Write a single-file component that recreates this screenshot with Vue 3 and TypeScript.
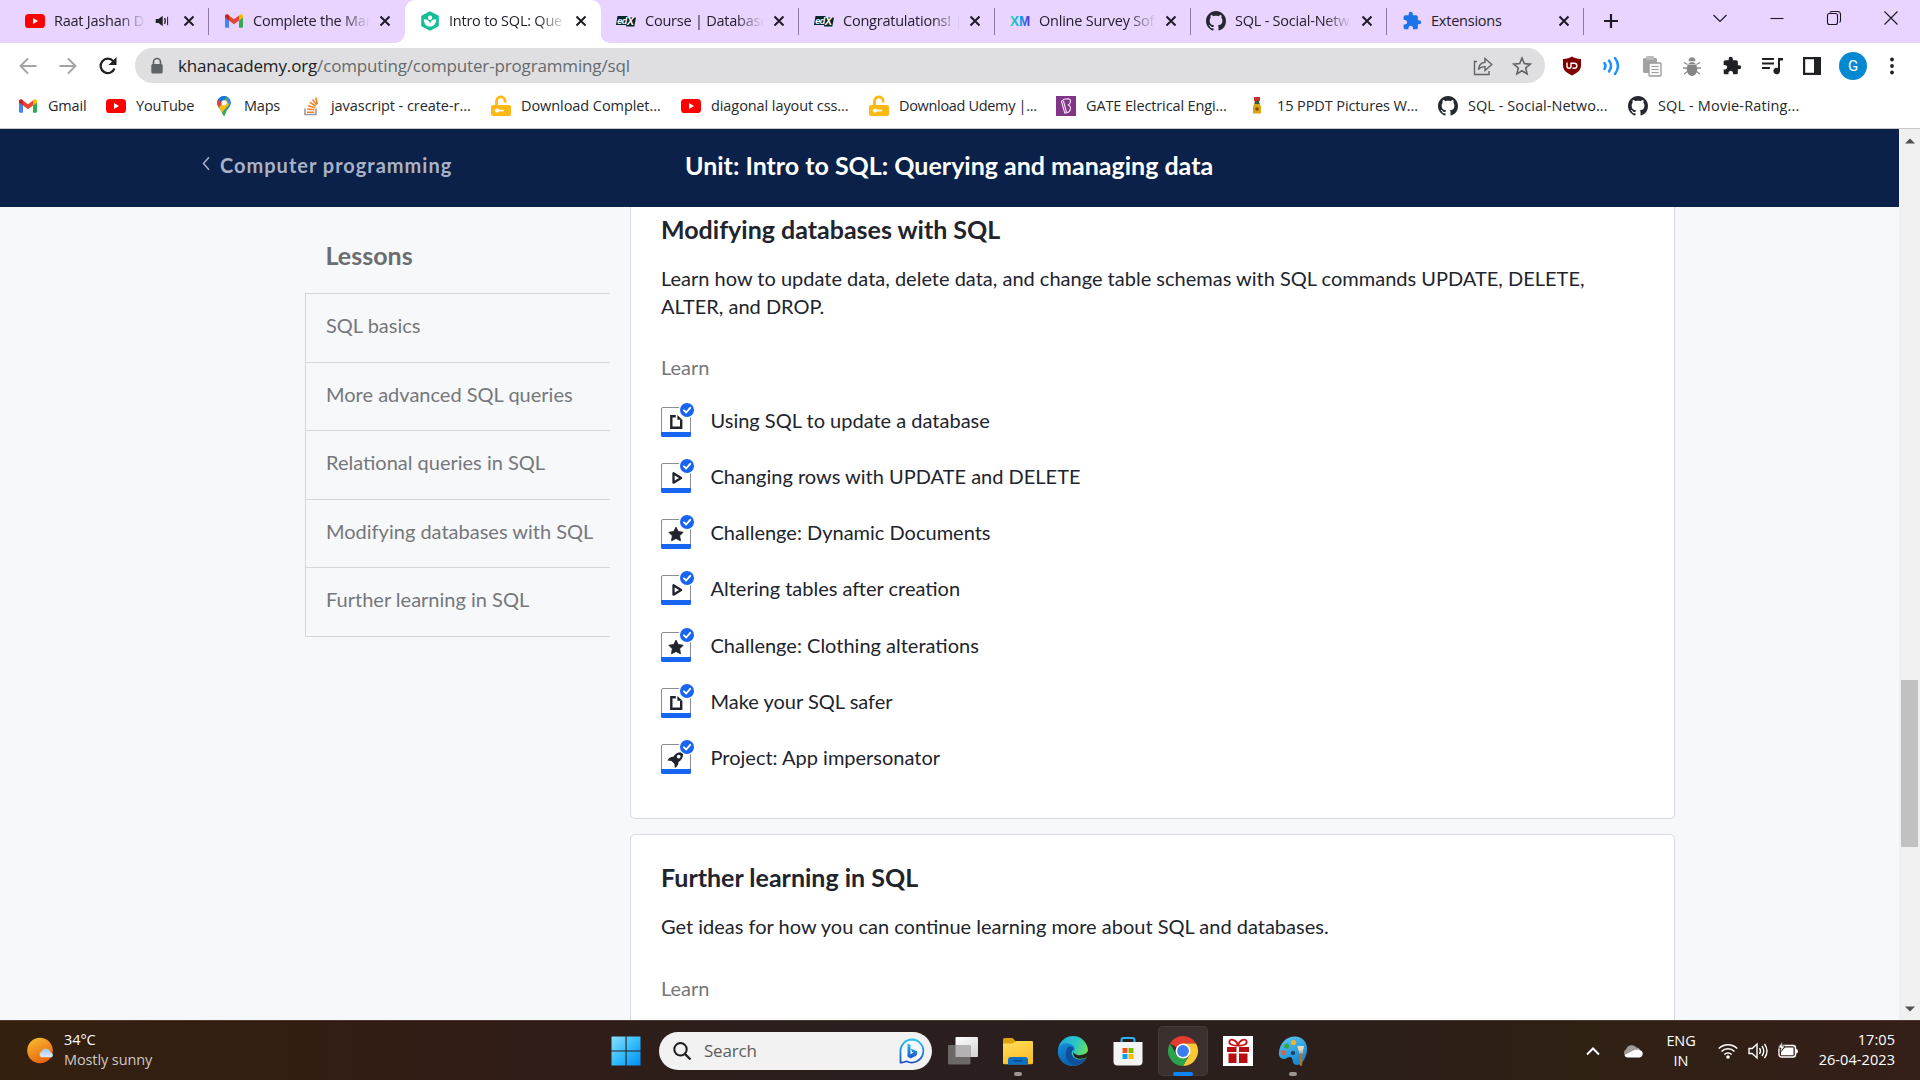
<script setup lang="ts">
interface Icon { box: string; body: string }
interface Tab { icon: string; title: string; width: number; active?: boolean; audio?: boolean; line?: boolean }
interface Bookmark { icon: string; label: string; width: number; spacing: number }

const octocatPath = 'M8 0C3.58 0 0 3.58 0 8c0 3.54 2.29 6.53 5.47 7.59.4.07.55-.17.55-.38 0-.19-.01-.82-.01-1.49-2.01.37-2.53-.49-2.69-.94-.09-.23-.48-.94-.82-1.13-.28-.15-.68-.52-.01-.53.63-.01 1.08.58 1.23.82.72 1.21 1.87.87 2.33.66.07-.52.28-.87.51-1.07-1.78-.2-3.64-.89-3.64-3.95 0-.87.31-1.59.82-2.15-.08-.2-.36-1.02.08-2.12 0 0 .67-.21 2.2.82.64-.18 1.32-.27 2-.27s1.36.09 2 .27c1.53-1.04 2.2-.82 2.2-.82.44 1.1.16 1.92.08 2.12.51.56.82 1.27.82 2.15 0 3.07-1.87 3.75-3.65 3.95.29.25.54.73.54 1.48 0 1.07-.01 1.93-.01 2.2 0 .21.15.46.55.38A8.01 8.01 0 0 0 16 8c0-4.42-3.58-8-8-8z'
const puzzlePath = 'M20.5 11H19V7c0-1.1-.9-2-2-2h-4V3.5a2.5 2.5 0 0 0-5 0V5H4c-1.1 0-2 .9-2 2v3.8h1.5c1.5 0 2.7 1.2 2.7 2.7S5 16.2 3.5 16.2H2V20c0 1.1.9 2 2 2h3.8v-1.5c0-1.5 1.2-2.7 2.7-2.7s2.7 1.2 2.7 2.7V22H17c1.1 0 2-.9 2-2v-4h1.5a2.5 2.5 0 0 0 0-5z'

const icons: Record<string, Icon> = {
  youtube: { box: '0 0 20 20', body: '<rect y="3" width="20" height="14" rx="3.6" fill="#f00"/><path d="M8 7l5 3-5 3z" fill="#fff"/>' },
  gmail: { box: '0 0 20 20', body: '<path d="M1 6v9.4c0 .8.6 1.3 1.3 1.3H5V9z" fill="#4285f4"/><path d="M15 9v7.7h2.7c.7 0 1.3-.5 1.3-1.3V6z" fill="#34a853"/><path d="M15 4.600V9.500l4-3V5c0-1.700-1.900-2.400-3.200-1.400z" fill="#fbbc04"/><path d="M5 9.500V4.500l5 3.800 5-3.800v5l-5 3.800z" fill="#ea4335"/><path d="M1 5v1.500l4 3v-5l-.8-.9C2.900 2.600 1 3.300 1 5z" fill="#c5221f"/>' },
  khan: { box: '0 0 20 20', body: '<path d="M10 .3l8.200 4.300q.6.400.600 1v8.800q0 .6-.6 1L10 19.700 1.800 15.400q-.6-.400-.6-1V5.600q0-.6.600-1z" fill="#14bf96"/><circle cx="10" cy="6.800" r="2.200" fill="#fff"/><path d="M3.800 8.200c3.600 0 5.400 1.600 6.200 4 .8-2.400 2.600-4 6.200-4 0 4.600-2.700 7.400-6.200 7.400s-6.200-2.800-6.200-7.400z" fill="#fff"/>' },
  edx: { box: '0 0 20 20', body: '<path d="M1.500 5h10l-.300 1.500H20L18.300 15.500H10l.2-1.500H0z" fill="#02262b"/><text x="1.300" y="12.500" font-size="9" font-weight="700" font-style="italic" font-family="Liberation Sans" fill="#fff" textLength="10">ed</text><text x="11" y="14.300" font-size="10.500" font-weight="700" font-style="italic" font-family="Liberation Sans" fill="#fff">X</text>' },
  xm: { box: '0 0 20 20', body: '<defs><linearGradient id="xmg" x2="1"><stop stop-color="#21dbaa"/><stop offset=".5" stop-color="#00a8f5"/><stop offset="1" stop-color="#5a28d8"/></linearGradient></defs><text x="0" y="15.300" font-size="15" font-weight="700" font-family="Liberation Sans" fill="url(#xmg)" textLength="20" lengthAdjust="spacingAndGlyphs">XM</text>' },
  github: { box: '0 0 16 16', body: `<path d="${octocatPath}" fill="#24292f"/>` },
  puzzleBlue: { box: '0 0 24 24', body: `<path d="${puzzlePath}" fill="#1a73e8"/>` },
  puzzle: { box: '0 0 24 24', body: `<path d="${puzzlePath}" fill="#202124"/>` },
  maps: { box: '0 0 20 20', body: '<clipPath id="pin"><path d="M10 0a6.800 6.800 0 0 1 6.800 6.800c0 4.600-4 6-5.500 11.600-.4 1.700-2.200 1.700-2.600 0C7.200 12.800 3.200 11.400 3.200 6.800A6.800 6.800 0 0 1 10 0z"/></clipPath><g clip-path="url(#pin)"><path d="M0 0h20v20H0z" fill="#34a853"/><path d="M0 12L16 -2H0z" fill="#1a73e8"/><path d="M2 3l8 4-7 7z" fill="#ea4335"/><path d="M3 13L18 -3l2 8-11 11z" fill="#4285f4"/><path d="M4 12.500l8-9 3 5-8 9z" fill="#fbbc04"/></g><circle cx="10" cy="6.800" r="2.600" fill="#fff"/>' },
  stack: { box: '0 0 20 20', body: '<path d="M4 12.500v6h11v-6" fill="none" stroke="#9a9c9f" stroke-width="1.600"/><path d="M6 16.200h7.200M6.200 13.100l7.200.7M7 9.800l6.900 1.900M8.700 6.300l6 3.700M11.500 3.300l4.200 5.600M14.800 1.500l1.500 6.500" stroke="#f48024" stroke-width="1.500" fill="none"/>' },
  unlock: { box: '0 0 20 20', body: '<path d="M5.500 10V5.500a4.300 4.300 0 0 1 8.600-.500v1.500" fill="none" stroke="#fdb813" stroke-width="2.800"/><rect y="9" width="20" height="11" rx="2" fill="#fdb813"/><circle cx="6" cy="14.500" r="2.100" fill="#fff"/><path d="M6 13.700h7v1.700H6z" fill="#fff"/>' },
  byju: { box: '0 0 20 20', body: '<path d="M0 0h20v20H0z" fill="#813588"/><path d="M5.500 5.500L8 3.200l4-.5c3.500.2 3.200 5-.2 6.300 4 .5 3.200 7-1 7.800l-2 .4zM7.500 5l3 11.500" fill="none" stroke="#f6e5f7" stroke-width="1.100"/>' },
  medal: { box: '0 0 20 20', body: '<path d="M7 1h6v4H7z" fill="#c4302b"/><path d="M8 5h4l1 4H7z" fill="#3b5b2b"/><path d="M7 8h6l1 3v6.500H6V11z" fill="#d9a514"/><circle cx="10" cy="13" r="1.800" fill="#8a4a10"/>' },
  share: { box: '0 0 20 20', body: '<path d="M4 5.500H1.500v13h14.500V15M5.500 13.500c.5-5 3.300-7 6.500-7.200V2.500l6.800 6-6.800 6v-3.900c-3 0-5 .7-6.500 2.900z" fill="none" stroke="#5f6368" stroke-width="1.400"/>' },
  star: { box: '0 0 20 20', body: '<path d="M10 2l2.300 5.600 6 .5-4.600 3.900 1.400 5.900-5.100-3.200-5.100 3.200 1.400-5.900-4.600-3.900 6-.5z" fill="none" stroke="#5f6368" stroke-width="1.600"/>' },
  ublock: { box: '0 0 20 20', body: '<path d="M10 .5c2.500 1.600 5 2.300 9 2.400v6.600c0 5-4 7.500-9 10-5-2.500-9-5-9-10V2.900C5 2.800 7.500 2.100 10 .5z" fill="#800000"/><path d="M5 6.500v3.700a2 2 0 0 0 4 0V6.500M9 7.200h3.300a2.500 2.500 0 0 1 0 5.100H10.500" fill="none" stroke="#fff" stroke-width="1.400"/>' },
  waves: { box: '0 0 20 20', body: '<path d="M2.500 7q2 3 0 6M7 4.500q4 5.500 0 11M13 2q6 8 0 16" fill="none" stroke="#1e90ff" stroke-width="2.500" stroke-linecap="round"/>' },
  copy: { box: '0 0 20 20', body: '<rect x="1" y="2" width="14" height="15" rx="1.500" fill="#a3a3a3"/><rect x="4" y="0" width="8" height="4" rx="1" fill="#bababa"/><rect x="7" y="7" width="12" height="13" rx="1" fill="#f7f7f7" stroke="#9b9b9b" stroke-width="1.300"/><path d="M9.500 10.500h7M9.500 13.500h7M9.500 16.500h7" stroke="#9b9b9b" stroke-width="1.200"/>' },
  bug: { box: '0 0 20 20', body: '<path d="M5.500 8.500L2 6.500M14.500 8.500L18 6.500M5 12H1M15 12h4M5.500 15.500L2 18M14.500 15.500l3.500 2.500" stroke="#8b8b8b" stroke-width="1.300"/><path d="M6.500 5.200a3.500 3.900 0 0 1 7 0z" fill="#8b8b8b"/><ellipse cx="10" cy="13" rx="5.300" ry="7" fill="#858585"/><path d="M5.500 8.500h9" stroke="#c4c4c4"/>' },
  queue: { box: '0 0 20 20', body: '<path d="M0 3h12M0 7.500h12M0 12h8" stroke="#202124" stroke-width="2"/><path d="M21 2h-5v10a3.300 3.300 0 1 0 2 3V4.500h3z" fill="#202124"/>' },
  panel: { box: '0 0 20 20', body: '<path d="M1 1h18v18H1zM3.200 3.200v13.600h8.800V3.200z" fill="#202124" fill-rule="evenodd"/>' },
  dots: { box: '0 0 20 20', body: '<g fill="#202124"><circle cx="10" cy="3.500" r="1.900"/><circle cx="10" cy="10" r="1.900"/><circle cx="10" cy="16.500" r="1.900"/></g>' },
  back: { box: '0 0 20 20', body: '<path d="M18.500 10H3M10 2.500L2.500 10l7.500 7.500" fill="none" stroke="#a2a4a7" stroke-width="2"/>' },
  forward: { box: '0 0 20 20', body: '<path d="M1.500 10H17M10 2.500l7.500 7.500-7.500 7.500" fill="none" stroke="#a2a4a7" stroke-width="2"/>' },
  reload: { box: '0 0 20 20', body: '<path d="M16.500 12.500A7.200 7.200 0 1 1 15.300 5.200" fill="none" stroke="#202124" stroke-width="2.200"/><path d="M18.500 1v8h-8z" fill="#202124"/>' },
  lock: { box: '0 0 20 20', body: '<path d="M6.500 9V6a3.500 3.500 0 0 1 7 0v3" fill="none" stroke="#5f6368" stroke-width="1.700"/><rect x="4.300" y="8" width="11.400" height="9.500" rx="1.500" fill="#5f6368"/>' },
  audio: { box: '0 0 20 20', body: '<path d="M1 7h4l6-4.500v15L5 13H1z" fill="#202124"/><path d="M13.500 6q2.500 4 0 8" fill="none" stroke="#202124" stroke-width="1.800"/><path d="M18 4v12" stroke="#202124" stroke-width="1.400"/>' },
  sun: { box: '0 0 28 28', body: '<defs><linearGradient id="sg" x2=".5" y2="1"><stop stop-color="#f7c034"/><stop offset="1" stop-color="#e8670c"/></linearGradient><linearGradient id="cg" y2="1" x2="0"><stop stop-color="#a9c8f2"/><stop offset="1" stop-color="#dce9fb"/></linearGradient></defs><circle cx="13" cy="13.500" r="12.800" fill="url(#sg)"/><path d="M14 20.300a3.600 3.600 0 0 1 .6-6.100 4.800 4.800 0 0 1 8.900 1 3 3 0 0 1 1.500 5.100z" fill="url(#cg)"/>' },
  windows: { box: '0 0 30 30', body: '<defs><linearGradient id="wg" x2="1" y2="1"><stop stop-color="#8be0ff"/><stop offset=".5" stop-color="#35bdfd"/><stop offset="1" stop-color="#008df5"/></linearGradient></defs><path d="M1 .5h13.500v14H.5V1zM15.600.5H29.500v14H15.600zM.5 15.600h14v14H.5zM15.600 15.600h13.900v14H15.600z" fill="url(#wg)"/>' },
  search: { box: '0 0 20 20', body: '<circle cx="8.500" cy="8.300" r="6.200" fill="none" stroke="#1d1d1d" stroke-width="2"/><path d="M13 13l5.500 5.500" stroke="#1d1d1d" stroke-width="2.300"/>' },
  bing: { box: '0 0 26 26', body: '<defs><linearGradient id="bg1" x2="0" y2="1"><stop stop-color="#27c0f1"/><stop offset="1" stop-color="#1e4fc9"/></linearGradient></defs><path d="M13 1.500a11.500 11.500 0 1 1-5.500 21.700q-3 1.500-6 1.300V13A11.500 11.500 0 0 1 13 1.500z" fill="#f7fbff" stroke="url(#bg1)" stroke-width="1.800"/><path d="M8.500 5.500l3 1.200v9.500l3-1.600-1.500-.8-1.200-3.200 5.700 2.300c1.500 1 1 4-.7 5l-5.300 2.700-3-2z" fill="url(#bg1)"/>' },
  taskview: { box: '0 0 30 30', body: '<defs><linearGradient id="tv" y2="1" x2=".6"><stop stop-color="#fff"/><stop offset="1" stop-color="#d8d8d8"/></linearGradient></defs><rect x="7.500" y="1" width="22.500" height="20" rx="1" fill="url(#tv)"/><rect y="9" width="22.500" height="19.500" rx="1" fill="#6c6868"/><path d="M7.500 9h15v12h-15z" fill="#b4b2b2"/>' },
  explorer: { box: '0 0 30 30', body: '<defs><linearGradient id="eg" y2="1" x2=".4"><stop stop-color="#ffde5c"/><stop offset="1" stop-color="#fdbe2a"/></linearGradient></defs><path d="M0 3.500q0-1.500 1.500-1.500h8L12.500 5v8H0z" fill="#e0a111"/><path d="M0 7.500h9.500l3.500-2.500h15.700q1.300 0 1.300 1.300V27q0 1.300-1.300 1.300H1.300Q0 28.300 0 27z" fill="url(#eg)"/><path d="M5 28.700V24q0-3 3-3h14q3 0 3 3v4.700z" fill="#0c6fc0"/><path d="M10.500 24.700h9" stroke="#064c8c" stroke-width="1.500"/>' },
  edge: { box: '0 0 30 30', body: '<defs><linearGradient id="ed1" x2="1" y2=".4"><stop stop-color="#1ba4e4"/><stop offset=".6" stop-color="#2cc7c5"/><stop offset="1" stop-color="#6bdf55"/></linearGradient><linearGradient id="ed2" x2=".6" y2="1"><stop stop-color="#1490dc"/><stop offset="1" stop-color="#0a59a5"/></linearGradient></defs><circle cx="15" cy="15" r="15" fill="url(#ed1)"/><path d="M0 14C1 8 7 6 12 8c4 1.500 5 4 4.500 5.500-5 1-5 9 3 10 4 .5 6-1 8.500-1.500C24 28 19 30 14.500 30 6 30-.5 23 0 14z" fill="url(#ed2)"/><path d="M10 11c-5 7-1 17 8 18.500 4-.5 8-3 10.500-7.500-4 2.500-9 2.500-12.500-.5-3-2.500-3-6-.5-8.500-.5-2-3.500-3-5.500-2z" fill="#0f4f9b"/><path d="M17 13c-2.500 2.500-1.500 5 2.500 6 4.500 1 10.500-1.500 10.500-5l.3 4.500c-1 3-3.300 4.500-5.300 4-6 1.500-11-2-9.500-6.500z" fill="#2b1f1d"/>' },
  store: { box: '0 0 30 30', body: '<path d="M8.500 8V4q0-2 2-2h9q2 0 2 2v4" fill="none" stroke="#2ab4f2" stroke-width="2"/><path d="M.5 6h29v19.500q0 4-4 4H4.500q-4 0-4-4z" fill="#f3f3f3"/><path d="M9.500 12h5v5h-5z" fill="#f25022"/><path d="M15.500 12h5v5h-5z" fill="#7fba00"/><path d="M9.500 18h5v5h-5z" fill="#00a4ef"/><path d="M15.500 18h5v5h-5z" fill="#ffb900"/>' },
  chrome: { box: '0 0 30 30', body: '<path d="M15 15L2 7.500A15 15 0 0 1 28 7.500H15z" fill="#e33b2e"/><path d="M15 7.500h13A15 15 0 0 1 15 30l6.500-11.200z" fill="#fcc934"/><path d="M2 7.500A15 15 0 0 0 15 30l6.500-11.200L15 15 8.500 18.800z" fill="#2ba24c"/><circle cx="15" cy="15" r="7.500" fill="#fff"/><circle cx="15" cy="15" r="5.900" fill="#3a7df0"/>' },
  gift: { box: '0 0 30 30', body: '<path d="M0 0h30v30H0z" fill="#fff"/><path d="M4 11h9.500v5H4zM16 11h10v5H16zM5.500 17.500h8V27h-8zM16 17.500h8.500V27H16z" fill="#b60f12"/><path d="M15 9.500C9 10 5.500 8 6.500 5c1.200-3 7.500-1 8.500 4.500C16 4 22.300 2 23.500 5c1 3-2.500 5-8.500 4.500z" fill="none" stroke="#c81216" stroke-width="1.800"/>' },
  paint: { box: '0 0 30 30', body: '<defs><linearGradient id="pg" x2=".5" y2="1"><stop stop-color="#5fc9f5"/><stop offset="1" stop-color="#1788d1"/></linearGradient></defs><path d="M17 .5c7 0 12 5 12 12 0 9-5 16.500-10 16.500-4 0-4-3-4.500-5.500S12 20 9 22 0 23 1 16C2 7 8 .5 17 .5z" fill="url(#pg)"/><circle cx="8.500" cy="10" r="2.600" fill="#35a646"/><circle cx="15.500" cy="6.500" r="2.600" fill="#f0b429"/><circle cx="5.500" cy="16.500" r="2.500" fill="#e2603a"/><circle cx="15" cy="17" r="2.100" fill="#173b63"/><path d="M20.500 15l-1-5h6.500l-1 5z" fill="#e8d9bd"/><path d="M21 14.500h4v3h-4z" fill="#b9bcc0"/><path d="M21.300 17.500h3.200l-.3 11.500q-1.300 2-2.500 0z" fill="#b96f24"/>' },
  up: { box: '0 0 20 20', body: '<path d="M4 13.500L10 7.500l6 6" fill="none" stroke="#fff" stroke-width="2"/>' },
  cloud: { box: '0 0 20 20', body: '<path d="M3.500 15A3.500 3.500 0 0 1 3 8.500a6 6 0 0 1 10.500-2A5 5 0 0 1 17 8.500L9 15z" fill="#a09b98"/><path d="M5 16.500q-3 0-3.500-2.500L9 10.200c3-1.700 5-1.500 7.500-1.200a3.800 3.800 0 0 1 0 7.500z" fill="#fff"/>' },
  wifi: { box: '0 0 20 20', body: '<path d="M.8 7.500a13 13 0 0 1 18.400 0M3.500 10.500a9.200 9.200 0 0 1 13 0M6.300 13.500a5.200 5.200 0 0 1 7.400 0" fill="none" stroke="#fff" stroke-width="1.500"/><circle cx="10" cy="16" r="1.800" fill="#fff"/>' },
  volume: { box: '0 0 20 20', body: '<path d="M1 7.500h3.200L9 3v14l-4.800-4.500H1z" fill="none" stroke="#fff" stroke-width="1.400"/><path d="M11.500 7.200q2 2.800 0 5.600M14 5q3.500 5 0 10M16.500 2.800q5 7.200 0 14.400" fill="none" stroke="#fff" stroke-width="1.400"/>' },
  battery: { box: '0 0 20 20', body: '<rect x="1" y="4.500" width="16.500" height="11.500" rx="2.500" fill="none" stroke="#fff" stroke-width="1.400"/><path d="M3 14.200V11L7 6.500h8.500v7.700z" fill="#fff"/><path d="M18 8q2 0 2 2.300t-2 2.300z" fill="#fff"/><path d="M4.500 0L0 7h3l-1 5 5-7H4z" fill="#fff" stroke="#2e1f14" stroke-width=".7"/>' },
  article: { box: '0 0 34 34', body: '<path d="M14.800 13.200h-4.500v11.600h9.900V16.800" fill="none" stroke="#21242c" stroke-width="2.400"/><path d="M16.400 11.900l5 4.900h-5z" fill="#21242c"/>' },
  video: { box: '0 0 34 34', body: '<path d="M12.500 14.300v9.400l7.600-4.700z" fill="none" stroke="#21242c" stroke-width="2.300" stroke-linejoin="round"/>' },
  challenge: { box: '0 0 34 34', body: '<path d="M15 12.200l2.200 4.400 4.900.7-3.500 3.500.8 4.900-4.400-2.300-4.400 2.300.8-4.900-3.500-3.500 4.900-.7z" fill="#21242c" stroke="#21242c" stroke-linejoin="round"/>' },
  project: { box: '0 0 34 34', body: '<path fill-rule="evenodd" d="M22 12.500c-4-.6-7.600.8-9.600 4.300-2.600 0-5 1.500-6 3.800l4.100.3 3 3 .3 4.100c2.300-1 3.700-3.400 3.700-6 3.500-2 5-5.400 4.500-9.500zm-4.300 6a1.900 1.900 0 1 1 0-3.800 1.900 1.900 0 0 1 0 3.800z" fill="#21242c"/>' },
}

const tabs: Tab[] = [
  { icon: 'youtube', title: 'Raat Jashan D', width: 199, audio: true, line: true },
  { icon: 'gmail', title: 'Complete the Mar', width: 196 },
  { icon: 'khan', title: 'Intro to SQL: Que', width: 196, active: true },
  { icon: 'edx', title: 'Course | Database', width: 198, line: true },
  { icon: 'edx', title: 'Congratulations! |', width: 196, line: true },
  { icon: 'xm', title: 'Online Survey Sof', width: 196, line: true },
  { icon: 'github', title: 'SQL - Social-Netw', width: 196, line: true },
  { icon: 'puzzleBlue', title: 'Extensions', width: 197, line: true },
]

const bookmarks: Bookmark[] = [
  { icon: 'gmail', label: 'Gmail', width: 88, spacing: -0.2 },
  { icon: 'youtube', label: 'YouTube', width: 108, spacing: -0.2 },
  { icon: 'maps', label: 'Maps', width: 87, spacing: -0.2 },
  { icon: 'stack', label: 'javascript - create-r...', width: 190, spacing: -0.06 },
  { icon: 'unlock', label: 'Download Complet...', width: 190, spacing: -0.07 },
  { icon: 'youtube', label: 'diagonal layout css...', width: 188, spacing: -0.08 },
  { icon: 'unlock', label: 'Download Udemy |...', width: 187, spacing: -0.33 },
  { icon: 'byju', label: 'GATE Electrical Engi...', width: 191, spacing: -0.12 },
  { icon: 'medal', label: '15 PPDT Pictures W...', width: 191, spacing: -0.1 },
  { icon: 'github', label: 'SQL - Social-Netwo...', width: 190, spacing: 0.06 },
  { icon: 'github', label: 'SQL - Movie-Rating...', width: 190, spacing: 0.14 },
]

const extensions = ['ublock', 'waves', 'copy', 'bug', 'puzzle', 'queue', 'panel']

const lessons = ['SQL basics', 'More advanced SQL queries', 'Relational queries in SQL', 'Modifying databases with SQL', 'Further learning in SQL']

const items = [
  { kind: 'article', title: 'Using SQL to update a database' },
  { kind: 'video', title: 'Changing rows with UPDATE and DELETE' },
  { kind: 'challenge', title: 'Challenge: Dynamic Documents' },
  { kind: 'video', title: 'Altering tables after creation' },
  { kind: 'challenge', title: 'Challenge: Clothing alterations' },
  { kind: 'article', title: 'Make your SQL safer' },
  { kind: 'project', title: 'Project: App impersonator' },
]

const apps = [
  { icon: 'taskview', state: '' },
  { icon: 'explorer', state: 'open' },
  { icon: 'edge', state: '' },
  { icon: 'store', state: '' },
  { icon: 'chrome', state: 'focused' },
  { icon: 'gift', state: '' },
  { icon: 'paint', state: 'open' },
]
</script>

<template>
  <div class="screen">
    <div class="tabstrip">
      <div v-for="(t, i) in tabs" :key="i" class="tab" :class="{ active: t.active, line: t.line }" :style="{ width: t.width + 'px' }">
        <svg class="i20" :viewBox="icons[t.icon].box" v-html="icons[t.icon].body" />
        <span class="tab-title" :class="{ fade: t.title !== 'Extensions' }">{{ t.title }}</span>
        <svg v-if="t.audio" class="audio" :viewBox="icons.audio.box" v-html="icons.audio.body" />
        <svg class="close" viewBox="0 0 12 12"><path d="M1.500 1.500l9 9M10.500 1.500l-9 9" stroke="#1f1b24" stroke-width="2" /></svg>
      </div>
      <svg class="plus" viewBox="0 0 16 16"><path d="M8 1v14M1 8h14" stroke="#1f1b24" stroke-width="2.200" /></svg>
      <div class="window-controls">
        <svg viewBox="0 0 14 14"><path d="M.5 4L7 10.500 13.500 4" /></svg>
        <svg viewBox="0 0 14 14"><path d="M.5 7.500h13" /></svg>
        <svg viewBox="0 0 14 14"><rect x=".5" y="2.500" width="10" height="11" rx="2" /><path d="M3 1.500Q3.500.5 5 .5h5.500q3 0 3 3v6q0 1.500-1 2" /></svg>
        <svg viewBox="0 0 14 14"><path d="M.5.5l13 13M13.500.5l-13 13" /></svg>
      </div>
    </div>

    <div class="toolbar">
      <div class="nav">
        <svg v-for="n in ['back', 'forward', 'reload']" :key="n" class="i20" :viewBox="icons[n].box" v-html="icons[n].body" />
      </div>
      <div class="omnibox">
        <svg class="i20" :viewBox="icons.lock.box" v-html="icons.lock.body" />
        <div class="url">khanacademy.org<span>/computing/computer-programming/sql</span></div>
        <svg class="i20" :viewBox="icons.share.box" v-html="icons.share.body" />
        <svg class="i20" :viewBox="icons.star.box" v-html="icons.star.body" />
      </div>
      <div class="extensions">
        <svg v-for="e in extensions" :key="e" class="i20" :viewBox="icons[e].box" v-html="icons[e].body" />
      </div>
      <div class="avatar">G</div>
      <svg class="i20" :viewBox="icons.dots.box" v-html="icons.dots.body" />
    </div>

    <div class="bookmarks">
      <div v-for="(b, i) in bookmarks" :key="i" class="bookmark" :style="{ width: b.width + 'px', letterSpacing: b.spacing + 'px' }">
        <svg class="i20" :viewBox="icons[b.icon].box" v-html="icons[b.icon].body" />
        <span>{{ b.label }}</span>
      </div>
    </div>

    <div class="viewport">
      <div class="page">
        <header class="unit-bar">
          <a class="back-link">
            <svg viewBox="0 0 8 14"><path d="M7 .8L1.500 7 7 13.200" fill="none" stroke="#a9b2c6" stroke-width="1.500" /></svg>
            Computer programming
          </a>
          <h1>Unit: Intro to SQL: Querying and managing data</h1>
        </header>
        <div class="columns">
          <aside>
            <h2>Lessons</h2>
            <nav class="lessons">
              <a v-for="l in lessons" :key="l">{{ l }}</a>
            </nav>
          </aside>
          <main>
            <section class="card first">
              <h3>Modifying databases with SQL</h3>
              <p>Learn how to update data, delete data, and change table schemas with SQL commands UPDATE, DELETE,<br>ALTER, and DROP.</p>
              <h4>Learn</h4>
              <ul>
                <li v-for="it in items" :key="it.title">
                  <svg class="kind" viewBox="0 0 34 34">
                    <path d="M.5 31V6q0-1.500 1.500-1.500h26q1.500 0 1.500 1.500v25" fill="#fff" stroke="#8a8d92" />
                    <path d="M0 29h30v3.500q0 1.500-1.500 1.500h-27Q0 34 0 32.500z" fill="#1865f2" />
                    <g v-html="icons[it.kind].body" />
                    <circle cx="26" cy="7" r="8.300" fill="#fff" />
                    <circle cx="26" cy="7" r="7" fill="#1865f2" />
                    <path d="M23 7.300l2.200 2.200 4-4.700" fill="none" stroke="#fff" stroke-width="1.900" stroke-linecap="round" stroke-linejoin="round" />
                  </svg>
                  <span>{{ it.title }}</span>
                </li>
              </ul>
            </section>
            <section class="card second">
              <h3>Further learning in SQL</h3>
              <p>Get ideas for how you can continue learning more about SQL and databases.</p>
              <h4>Learn</h4>
            </section>
          </main>
        </div>
      </div>
      <div class="scrollbar">
        <svg viewBox="0 0 10 6"><path d="M0 5.500L5 .500l5 5z" fill="#505050" /></svg>
        <div class="thumb"></div>
        <svg viewBox="0 0 10 6"><path d="M0 .500l5 5 5-5z" fill="#505050" /></svg>
      </div>
    </div>

    <footer class="taskbar">
      <div class="weather">
        <svg class="i28" :viewBox="icons.sun.box" v-html="icons.sun.body" />
        <div class="weather-text"><div>34°C</div><div class="cond">Mostly sunny</div></div>
      </div>
      <svg class="start" :viewBox="icons.windows.box" v-html="icons.windows.body" />
      <div class="search">
        <svg class="i20" :viewBox="icons.search.box" v-html="icons.search.body" />
        <span>Search</span>
        <svg class="bing" :viewBox="icons.bing.box" v-html="icons.bing.body" />
      </div>
      <div class="apps">
        <div v-for="a in apps" :key="a.icon" class="app" :class="a.state">
          <svg :viewBox="icons[a.icon].box" v-html="icons[a.icon].body" />
        </div>
      </div>
      <div class="tray">
        <svg class="i20" :viewBox="icons.up.box" v-html="icons.up.body" />
        <svg class="i20 cloud" :viewBox="icons.cloud.box" v-html="icons.cloud.body" />
        <div class="lang"><div>ENG</div><div>IN</div></div>
        <div class="status">
          <svg v-for="s in ['wifi', 'volume', 'battery']" :key="s" class="i20" :viewBox="icons[s].box" v-html="icons[s].body" />
        </div>
        <div class="clock"><div>17:05</div><div>26-04-2023</div></div>
      </div>
    </footer>
  </div>
</template>

<style>
body { margin: 0; overflow: hidden; }
</style>

<style scoped>
* { box-sizing: border-box; }
.screen { width: 1920px; height: 1080px; display: flex; flex-direction: column; font-family: "Open Sans", "Noto Sans", sans-serif; overflow: hidden; background: #fff; }
svg { flex: none; display: block; overflow: visible; }
.i20 { width: 20px; height: 20px; }
.i28 { width: 28px; height: 28px; }

.tabstrip { height: 43px; flex: none; background: #e8d4fe; display: flex; padding-left: 10px; }
.tab { flex: none; height: 43px; display: flex; align-items: center; border-right: 1px solid transparent; padding: 0 13px 1px 15px; }
.tab.line { border-image: linear-gradient(transparent 9px, #8d7ba3 9px, #8d7ba3 34px, transparent 34px) 1; border-width: 0 1px 0 0; border-style: solid; }
.tab.active { background: #fff; border-radius: 10px 10px 0 0; position: relative; }
.tab.active::before, .tab.active::after { content: ""; position: absolute; bottom: 0; width: 10px; height: 10px; }
.tab.active::before { left: -10px; background: radial-gradient(circle at 0 0, transparent 9.500px, #fff 10px); }
.tab.active::after { right: -10px; background: radial-gradient(circle at 100% 0, transparent 9.500px, #fff 10px); }
.tab-title { flex: 1; min-width: 0; margin-left: 9px; margin-right: 9px; font-size: 14.500px; letter-spacing: -0.230px; color: #25202c; white-space: nowrap; overflow: hidden; line-height: 24px; padding-bottom: 1px; }
.fade { -webkit-mask-image: linear-gradient(90deg, #000 calc(100% - 28px), transparent); mask-image: linear-gradient(90deg, #000 calc(100% - 28px), transparent); }
.audio { width: 14px; height: 14px; margin-right: 14px; }
.close { width: 12px; height: 12px; }
.plus { width: 16px; height: 16px; margin: 13px 0 0 19px; }
.window-controls { margin: 11px 22px 0 auto; display: flex; gap: 43px; }
.window-controls svg { width: 14px; height: 14px; fill: none; stroke: #1b1720; stroke-width: 1.100; }

.toolbar { height: 45px; flex: none; display: flex; align-items: center; padding: 0 18px; }
.nav { display: flex; gap: 20px; width: 117px; }
.omnibox { width: 1410px; height: 35px; border-radius: 18px; background: #dfdfe1; display: flex; align-items: center; padding: 0 13px 0 12px; }
.url { flex: 1; margin-left: 11px; font-size: 17px; color: #202124; letter-spacing: -0.150px; }
.url span { color: #666a6e; }
.omnibox .i20:last-child { margin-left: 19px; }
.extensions { display: flex; gap: 20px; margin-left: 17px; }
.avatar { width: 28px; height: 28px; border-radius: 50%; background: #0488d1; color: #fff; font: 15px Roboto, sans-serif; display: flex; align-items: center; justify-content: center; margin: 0 15px 0 17px; }

.bookmarks { height: 41px; flex: none; display: flex; padding: 0 0 5px 18px; border-bottom: 1px solid #c6c8cc; }
.bookmark { flex: none; display: flex; align-items: center; gap: 10px; font-size: 14.500px; color: #25282c; white-space: nowrap; }

.viewport { flex: 1; min-height: 0; display: flex; background: #f7f8fa; font-family: Lato, sans-serif; }
.page { width: 1899px; overflow: hidden; }
.unit-bar { height: 78px; background: #0b2149; display: flex; align-items: center; padding: 0 0 6px 202px; }
.back-link { width: 483px; display: flex; align-items: center; gap: 10px; font-size: 20px; font-weight: 700; letter-spacing: 1px; color: #a9b2c6; }
.back-link svg { width: 8px; height: 15px; margin-bottom: 3px; }
h1 { margin: 0; font-size: 25px; line-height: 30px; color: #fff; font-weight: 700; }
.columns { display: flex; padding-left: 305px; }
aside { width: 305px; margin-right: 20px; padding-top: 33px; }
aside h2 { margin: 0 0 23px 20.500px; font-size: 25px; line-height: 30px; color: #6b6d71; }
.lessons { border: 1px solid #d5d7da; border-width: 1px 0 0 1px; }
.lessons a { display: flex; align-items: center; height: 68.500px; border-bottom: 1px solid #d5d7da; padding: 0 0 5px 20px; font-size: 20px; color: #75777b; }
.card { width: 1045px; background: #fff; border: 1px solid #d8dade; border-radius: 5px; padding: 27px 30px 0; }
.card.first { height: 612px; border-top: 0; border-radius: 0 0 5px 5px; padding-top: 7px; margin-bottom: 15px; }
.card.second { height: 400px; }
h3 { margin: 0; font-size: 25px; line-height: 30px; color: #21242c; }
p { margin: 21px 0 34px; font-size: 20px; line-height: 27.500px; color: #21242c; white-space: nowrap; }
h4 { margin: 0 0 10px; font-size: 20px; line-height: 27.500px; font-weight: 400; color: #75777b; }
ul { margin: 0; padding: 0; list-style: none; }
li { height: 56.250px; display: flex; align-items: center; font-size: 20px; color: #21242c; }
.kind { width: 34px; height: 34px; margin-right: 15.500px; }
.scrollbar { width: 21px; background: #f0f0f0; display: flex; flex-direction: column; align-items: center; padding: 9px 0 8px; }
.scrollbar svg { width: 10px; height: 6px; }
.thumb { width: 17px; height: 167px; background: #c1c1c1; margin: 536px 0 auto; }

.taskbar { height: 60px; flex: none; display: flex; align-items: center; color: #fff; background: linear-gradient(90deg, #33200f, #311d16 25%, #2a1f1f 45%, #2b1f1c 65%, #2f2014 82%, #341f19); border-top: 1px solid #4a3b33; font-size: 14.500px; line-height: 20px; letter-spacing: -0.100px; }
.weather { width: 611px; display: flex; gap: 9px; padding-left: 27px; align-items: center; }
.weather-text, .clock { padding-bottom: 2px; }
.cond { color: #d0c8c4; }
.start { width: 30px; height: 30px; }
.search { width: 273px; height: 38px; border-radius: 19px; background: #f2f2f2; color: #5c5c5c; margin-left: 18px; display: flex; align-items: center; padding: 0 7px 0 13px; font-size: 17px; }
.search span { flex: 1; margin-left: 12px; letter-spacing: -0.200px; }
.bing { width: 26px; height: 26px; }
.apps { display: flex; gap: 5px; margin-left: 6px; }
.app { width: 50px; height: 50px; border-radius: 5px; display: flex; align-items: center; justify-content: center; position: relative; }
.app svg { width: 30px; height: 30px; }
.app.focused { background: #3b302d; box-shadow: inset 0 0 0 1px #463b37; }
.app.open::after, .app.focused::after { content: ""; position: absolute; bottom: 0; width: 8px; height: 4px; border-radius: 2px; background: #9c9592; }
.app.focused::after { width: 20px; background: #0a84ff; }
.tray { margin-left: auto; display: flex; align-items: center; padding-right: 25px; }
.cloud { margin-left: 20px; }
.lang { width: 50px; margin-left: 13px; text-align: center; }
.status { display: flex; gap: 10px; margin-left: 12px; }
.clock { width: 97px; text-align: right; letter-spacing: 0.070px; }
</style>
